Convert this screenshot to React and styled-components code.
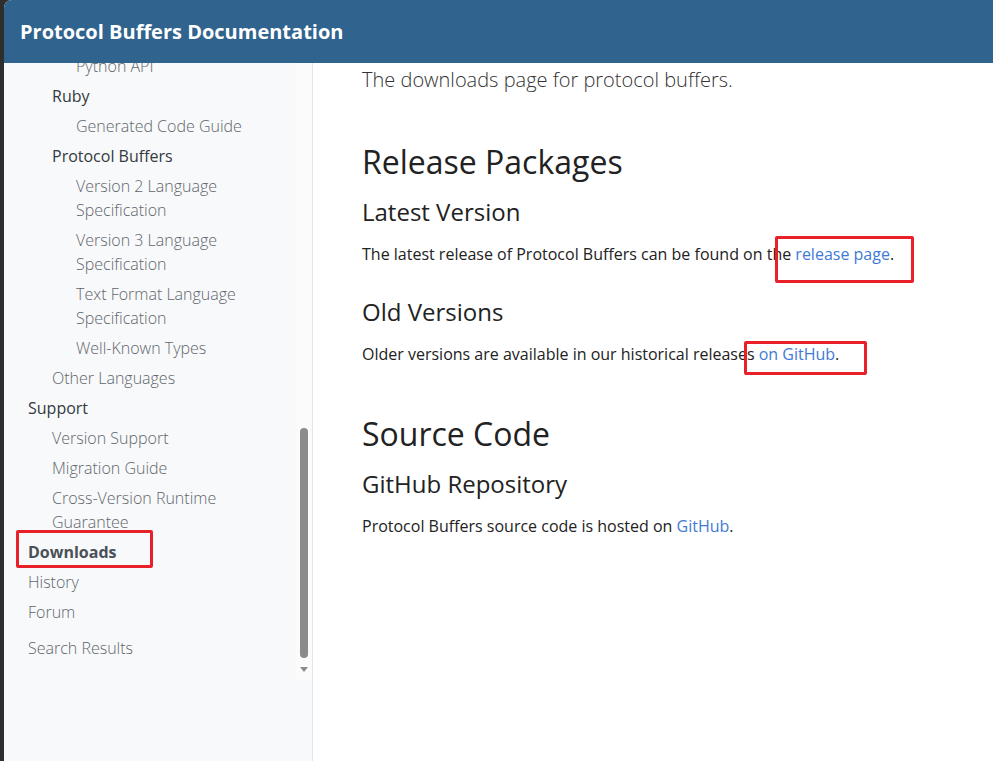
import styled, { createGlobalStyle } from 'styled-components';

const GlobalStyle = createGlobalStyle`
  html, body {
    margin: 0;
    padding: 0;
    background: #2e2e2e;
  }

  body {
    font-family: "Open Sans", "Noto Sans", sans-serif;
  }
`;

const navItems = [
  { label: 'Python API', level: 3 },
  { label: 'Ruby', level: 2, strong: true },
  { label: 'Generated Code Guide', level: 3 },
  { label: 'Protocol Buffers', level: 2, strong: true },
  { label: 'Version 2 Language Specification', level: 3 },
  { label: 'Version 3 Language Specification', level: 3 },
  { label: 'Text Format Language Specification', level: 3 },
  { label: 'Well-Known Types', level: 3 },
  { label: 'Other Languages', level: 2 },
  { label: 'Support', level: 1, strong: true },
  { label: 'Version Support', level: 2 },
  { label: 'Migration Guide', level: 2 },
  { label: 'Cross-Version Runtime Guarantee', level: 2 },
  { label: 'Downloads', level: 1, active: true },
  { label: 'History', level: 1 },
  { label: 'Forum', level: 1 },
  { label: 'Search Results', level: 1, spaced: true },
];

const App = () => {
  return (
    <>
      <GlobalStyle />
      <Frame>
        <Window>
          <Header>
            <Brand>Protocol Buffers Documentation</Brand>
          </Header>
          <Body>
            <Sidebar>
              <NavScroll>
                <NavList>
                  {navItems.map((item) => (
                    <NavItem
                      key={item.label}
                      $level={item.level}
                      $strong={item.strong}
                      $active={item.active}
                      $spaced={item.spaced}
                    >
                      {item.label}
                    </NavItem>
                  ))}
                </NavList>
                <ScrollTrack>
                  <ScrollThumb />
                  <ScrollArrow />
                </ScrollTrack>
              </NavScroll>
            </Sidebar>
            <Main>
              <Lead>The downloads page for protocol buffers.</Lead>
              <H2>Release Packages</H2>
              <H3>Latest Version</H3>
              <P>
                The latest release of Protocol Buffers can be found on the{' '}
                <Link>release page</Link>.
              </P>
              <H3 $afterText>Old Versions</H3>
              <P>
                Older versions are available in our historical releases{' '}
                <Link>on GitHub</Link>.
              </P>
              <H2 $afterText>Source Code</H2>
              <H3>GitHub Repository</H3>
              <P>
                Protocol Buffers source code is hosted on <Link>GitHub</Link>.
              </P>
            </Main>
          </Body>
        </Window>
        <Mark style={{ left: 16, top: 530, width: 137, height: 38 }} />
        <Mark style={{ left: 775, top: 236, width: 139, height: 47 }} />
        <Mark style={{ left: 744, top: 341, width: 123, height: 34 }} />
      </Frame>
    </>
  );
};

const Frame = styled.div`
  position: relative;
  height: 761px;
  padding-left: 4px;
  overflow: hidden;
`;

const Window = styled.div`
  height: 100%;
  display: flex;
  flex-direction: column;
  border-top-left-radius: 8px;
  overflow: hidden;
  background: #fff;
`;

const Header = styled.header`
  height: 63px;
  flex-shrink: 0;

  display: flex;
  align-items: center;
  padding-left: 16px;

  background: #30638e;
`;

const Brand = styled.span`
  color: #fff;
  font-size: 20px;
  font-weight: 700;
`;

const Body = styled.div`
  flex: 1;
  display: flex;
  min-height: 0;
`;

const Sidebar = styled.aside`
  width: 308px;
  flex-shrink: 0;

  background: #f8f9fa;
  border-right: 1px solid #e3e6ea;
`;

const NavScroll = styled.div`
  height: 618px;
  display: flex;
  overflow: hidden;
`;

const NavList = styled.ul`
  flex: 1;
  list-style: none;
  margin: -12px 0 0 0;
  padding: 0;
`;

const indent = { 1: 24, 2: 48, 3: 72 };

const NavItem = styled.li`
  padding: 3px 40px 3px ${({ $level }) => indent[$level]}px;
  margin-top: ${({ $spaced }) => ($spaced ? '6px' : '0')};

  font-size: 16px;
  line-height: 24px;
  font-weight: ${({ $strong, $active }) =>
    $active ? 700 : $strong ? 400 : 300};
  color: ${({ $strong, $active }) =>
    $active ? '#495057' : $strong ? '#343a40' : '#5f666d'};
`;

const ScrollTrack = styled.div`
  width: 16px;
  flex-shrink: 0;

  display: flex;
  flex-direction: column;
  align-items: center;

  background: #fbfbfb;
`;

const ScrollThumb = styled.div`
  width: 8px;
  height: 230px;
  margin-top: 365px;

  border-radius: 4px;
  background: #8b8b8b;
`;

const ScrollArrow = styled.div`
  margin-top: 9px;
  width: 0;
  height: 0;

  border-left: 4px solid transparent;
  border-right: 4px solid transparent;
  border-top: 5px solid #8b8b8b;
`;

const Main = styled.main`
  flex: 1;
  padding: 2px 40px 0 49px;
  color: #222;
`;

const Lead = styled.p`
  margin: 0;
  font-size: 20px;
  font-weight: 300;
  line-height: 30px;
  color: #333;
`;

const H2 = styled.h2`
  margin: ${({ $afterText }) => ($afterText ? '48px' : '47px')} 0 0;
  font-size: 32px;
  font-weight: 400;
  line-height: 40px;
  color: #222;
`;

const H3 = styled.h3`
  margin: ${({ $afterText }) => ($afterText ? '30px' : '14px')} 0 0;
  font-size: 24px;
  font-weight: 400;
  line-height: 32px;
  color: #222;
`;

const P = styled.p`
  margin: 14px 0 0;
  font-size: 16px;
  line-height: 24px;
  color: #222;
`;

const Link = styled.a`
  color: #3f7ad6;
  text-decoration: none;
`;

const Mark = styled.div`
  position: absolute;
  box-sizing: border-box;
  border: 3px solid #e8202a;
  border-radius: 2px;
  pointer-events: none;
`;

export default App;
